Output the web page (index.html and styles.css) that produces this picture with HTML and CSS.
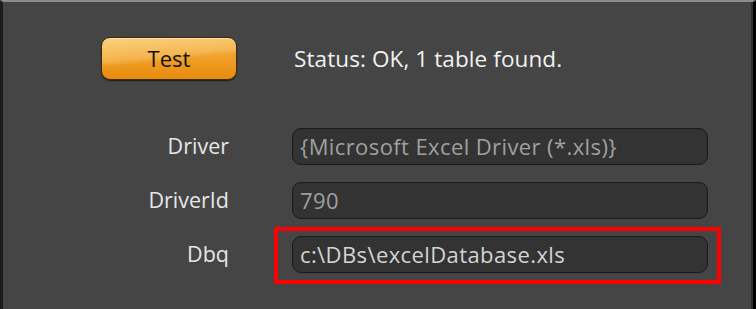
FILE: index.html
```html
<!DOCTYPE html>
<html>
<head>
<meta charset="utf-8">
<link rel="stylesheet" href="styles.css">
</head>
<body>
<div class="panel">
  <div class="test-row">
    <button class="btn-test">Test</button>
    <span class="status">Status: OK, 1 table found.</span>
  </div>
  <div class="form">
    <label class="lbl">Driver</label>
    <div class="field dim">{Microsoft Excel Driver (*.xls)}</div>
    <label class="lbl">DriverId</label>
    <div class="field dim">790</div>
    <label class="lbl">Dbq</label>
    <div class="field bright">c:\DBs\excelDatabase.xls<span class="highlight"></span></div>
  </div>
</div>
</body>
</html>
```
FILE: styles.css
```css
html, body {
  margin: 0;
  padding: 0;
  background: #454545;
}
.panel {
  box-sizing: border-box;
  width: 756px;
  height: 309px;
  background: #454545;
  border-top: 2px solid #8c8c8c;
  border-left: 3px solid #1c1c1c;
  border-right: 3px solid #000;
  box-shadow: inset -2px 0 0 #2e2e2e;
  padding-top: 35px;
  font-family: "Open Sans", "Noto Sans", sans-serif;
}
.test-row {
  display: flex;
  align-items: center;
  padding-left: 98px;
}
.btn-test {
  box-sizing: border-box;
  width: 136px;
  height: 43px;
  border: 1px solid #3a2a10;
  border-radius: 9px;
  background:
    linear-gradient(174deg, rgba(255,228,160,0.6) 0%, rgba(255,215,140,0.35) 44%, rgba(255,255,255,0) 54%),
    linear-gradient(180deg, #f3b24a 0%, #ef9f28 50%, #e88a0b 100%);
  box-shadow: 0 1px 1px rgba(0,0,0,0.6), inset 0 1px 0 rgba(255,235,190,0.7);
  color: #111;
  font-family: "Open Sans", "Noto Sans", sans-serif;
  font-size: 22px;
  font-weight: 500;
  padding: 0 0 2px;
  text-align: center;
}
.status {
  margin-left: 57px;
  color: #f2f2f2;
  font-size: 22.5px;
  font-weight: 500;
  letter-spacing: 0.1px;
  line-height: 30px;
}
.form {
  display: grid;
  grid-template-columns: 226px 416px;
  column-gap: 63px;
  row-gap: 17px;
  grid-auto-rows: 37px;
  margin-top: 48px;
}
.lbl {
  color: #e6e6e6;
  font-size: 21.5px;
  font-weight: 500;
  text-align: right;
  align-self: center;
  line-height: 30px;
  padding-bottom: 2px;
}
.field {
  position: relative;
  box-sizing: border-box;
  height: 37px;
  border: 1px solid #1a1a1a;
  border-radius: 9px;
  background: #333333;
  padding-left: 7px;
  font-size: 22px;
  letter-spacing: 0.4px;
  line-height: 34px;
  white-space: nowrap;
}
.dim { color: #a0a0a0; }
.bright { color: #d4d4d4; }
.highlight {
  position: absolute;
  left: -19px;
  right: -14px;
  top: -10px;
  bottom: -12px;
  border: 4px solid #ff0000;
  pointer-events: none;
}
```
